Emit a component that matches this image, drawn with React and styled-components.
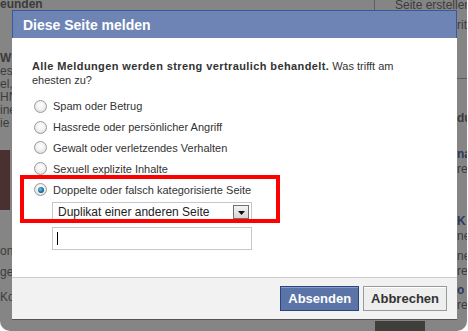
import React from "react";
import styled, { createGlobalStyle } from "styled-components";

const GlobalStyle = createGlobalStyle`
  html, body {
    margin: 0;
    padding: 0;
    background: #ffffff;
  }
  body {
    font-family: "Liberation Sans", Arial, sans-serif;
    font-size: 11px;
    color: #333333;
  }
`;

const reasons = [
  "Spam oder Betrug",
  "Hassrede oder persönlicher Angriff",
  "Gewalt oder verletzendes Verhalten",
  "Sexuell explizite Inhalte",
];

// bits of the page that peek out behind the dark overlay
const behind = [
  { text: "eunden", x: 0, y: -3, bold: true },
  { text: "Seite erstellen", x: 395, y: -2 },
  { text: "rit", x: 457, y: 18 },
  { text: "W", x: 0, y: 51, bold: true },
  { text: "es", x: 0, y: 64 },
  { text: "el,", x: 0, y: 77 },
  { text: "HN", x: 0, y: 90 },
  { text: "ine", x: 0, y: 103 },
  { text: "ie", x: 0, y: 116 },
  { text: "du", x: 457, y: 111, bold: true },
  { text: "na", x: 457, y: 147, blue: true, bold: true },
  { text: "re", x: 457, y: 162 },
  { text: "K", x: 457, y: 214, blue: true, bold: true },
  { text: "ne", x: 457, y: 229 },
  { text: "on", x: 0, y: 244 },
  { text: "get", x: 0, y: 265 },
  { text: "Kor", x: 0, y: 290 },
  { text: "ne", x: 457, y: 249 },
  { text: "re", x: 457, y: 264 },
  { text: "o", x: 457, y: 283, blue: true, bold: true },
  { text: "re", x: 457, y: 298 },
];

export default function App() {
  return (
    <>
      <GlobalStyle />
      <Frame>
        <Behind>
          {behind.map((b, i) => (
            <PageBit key={i} $bold={b.bold} $blue={b.blue} style={{ left: b.x, top: b.y }}>
              {b.text}
            </PageBit>
          ))}
          <PageLine style={{ left: 374, top: 0, width: 1, height: 10 }} />
          <PageLine style={{ left: 457, top: 78, width: 11, height: 1 }} />
          <PagePhoto $color="#4a3030" style={{ left: 0, top: 150, width: 10, height: 60 }} />
          <PagePhoto $color="#3e3e3a" style={{ left: 375, top: 321, width: 50, height: 10 }} />
        </Behind>

        <Dialog>
          <TitleBar>Diese Seite melden</TitleBar>
          <Body>
            <Intro>
              <strong>Alle Meldungen werden streng vertraulich behandelt.</strong> Was trifft am
              ehesten zu?
            </Intro>
            <RadioList>
              {reasons.map((r) => (
                <RadioRow key={r}>
                  <Radio />
                  <span>{r}</span>
                </RadioRow>
              ))}
              <Marked>
                <RadioRow>
                  <Radio $checked />
                  <span>Doppelte oder falsch kategorisierte Seite</span>
                </RadioRow>
                <Select>
                  <span>Duplikat einer anderen Seite</span>
                  <DropButton>
                    <svg width="7" height="4" viewBox="0 0 7 4">
                      <path d="M0 0h7L3.5 4z" fill="#111" />
                    </svg>
                  </DropButton>
                </Select>
                <Highlight />
              </Marked>
              <TextField>
                <Caret />
              </TextField>
            </RadioList>
          </Body>
          <Footer>
            <Button $primary>Absenden</Button>
            <Button>Abbrechen</Button>
          </Footer>
        </Dialog>
      </Frame>
    </>
  );
}

const Frame = styled.div`
  position: relative;
  width: 467px;
  height: 331px;
  box-sizing: border-box;
  padding: 10px 0 0 12px;
  background: #858585;
  border-radius: 0 0 10px 10px;
  overflow: hidden;
`;

const Behind = styled.div`
  position: absolute;
  inset: 0;
`;

const PageBit = styled.span`
  position: absolute;
  font-size: 12px;
  line-height: 14px;
  white-space: nowrap;
  font-weight: ${(p) => (p.$bold ? "bold" : "normal")};
  color: ${(p) => (p.$blue ? "#2d3a5c" : "#3c3c3c")};
`;

const PageLine = styled.div`
  position: absolute;
  background: #5e5e5e;
`;

const PagePhoto = styled.div`
  position: absolute;
  background: ${(p) => p.$color};
`;

const Dialog = styled.div`
  position: relative;
  width: 445px;
  height: 310px;
  display: flex;
  flex-direction: column;
  background: #ffffff;
  border-bottom: 1px solid #555555;
  box-sizing: border-box;
`;

const TitleBar = styled.div`
  height: 28px;
  box-sizing: border-box;
  padding: 0 10px;
  display: flex;
  align-items: center;
  background: #6d84b4;
  border: 1px solid #3b5998;
  border-bottom: none;
  color: #ffffff;
  font-size: 14px;
  font-weight: bold;
`;

const Body = styled.div`
  flex: 1;
  padding: 21px 20px 0 20px;
`;

const Intro = styled.p`
  margin: 0;
  line-height: 14px;
  width: 370px;

  strong {
    letter-spacing: 0.4px;
  }
`;

const RadioList = styled.div`
  display: flex;
  flex-direction: column;
  margin-top: 9px;
`;

const RadioRow = styled.label`
  display: flex;
  align-items: center;
  gap: 6px;
  height: 20.8px;
  padding-left: 2px;
  line-height: 14px;
`;

const Radio = styled.span`
  width: 11px;
  height: 11px;
  border-radius: 50%;
  border: 1px solid #9a9a9a;
  background: radial-gradient(circle at 50% 40%, #ffffff 0%, #f2f2f2 45%, #d4d4d4 100%);
  position: relative;
  flex-shrink: 0;

  &::after {
    content: "";
    display: ${(p) => (p.$checked ? "block" : "none")};
    position: absolute;
    left: 2.5px;
    top: 2.5px;
    width: 6px;
    height: 6px;
    border-radius: 50%;
    background: radial-gradient(circle at 40% 40%, #6ec4ea 0%, #1f6f9e 55%, #0d3f5e 100%);
  }
`;

const Marked = styled.div`
  position: relative;
`;

const Highlight = styled.div`
  position: absolute;
  left: -12px;
  top: -4px;
  width: 260px;
  height: 48px;
  box-sizing: border-box;
  border: 4px solid #ff0000;
  pointer-events: none;
`;

const Select = styled.div`
  margin: 2px 0 0 20px;
  width: 200px;
  height: 21px;
  box-sizing: border-box;
  border: 1px solid #c3c8cf;
  display: flex;
  align-items: center;
  justify-content: space-between;
  padding: 0 2px 0 5px;
  background: #ffffff;
  color: #222222;
  font-size: 12px;
`;

const DropButton = styled.span`
  width: 16px;
  height: 14px;
  box-sizing: border-box;
  border: 1px solid #707070;
  background: linear-gradient(#f4f4f4, #d6d6d6);
  display: flex;
  align-items: center;
  justify-content: center;
  padding-top: 2px;
`;

const TextField = styled.div`
  margin: 4px 0 0 20px;
  width: 200px;
  height: 23px;
  box-sizing: border-box;
  border: 1px solid #c3c8cf;
  display: flex;
  align-items: center;
  padding-left: 4px;
`;

const Caret = styled.span`
  width: 1px;
  height: 13px;
  background: #000000;
`;

const Footer = styled.div`
  height: 42px;
  box-sizing: border-box;
  background: #f2f2f2;
  border-top: 1px solid #cccccc;
  display: flex;
  align-items: center;
  justify-content: flex-end;
  gap: 4px;
  padding: 0 10px 0 0;
`;

const Button = styled.button`
  height: 25px;
  box-sizing: border-box;
  padding: 0 7px;
  font-family: "Liberation Sans", Arial, sans-serif;
  font-size: 13px;
  font-weight: bold;
  border: 1px solid ${(p) => (p.$primary ? "#29447e" : "#999999")};
  background: ${(p) => (p.$primary ? "#5b74a8" : "#eeeeee")};
  color: ${(p) => (p.$primary ? "#ffffff" : "#333333")};
  box-shadow: inset 0 1px 0 ${(p) => (p.$primary ? "#8a9cc2" : "#ffffff")};
  cursor: pointer;
`;
